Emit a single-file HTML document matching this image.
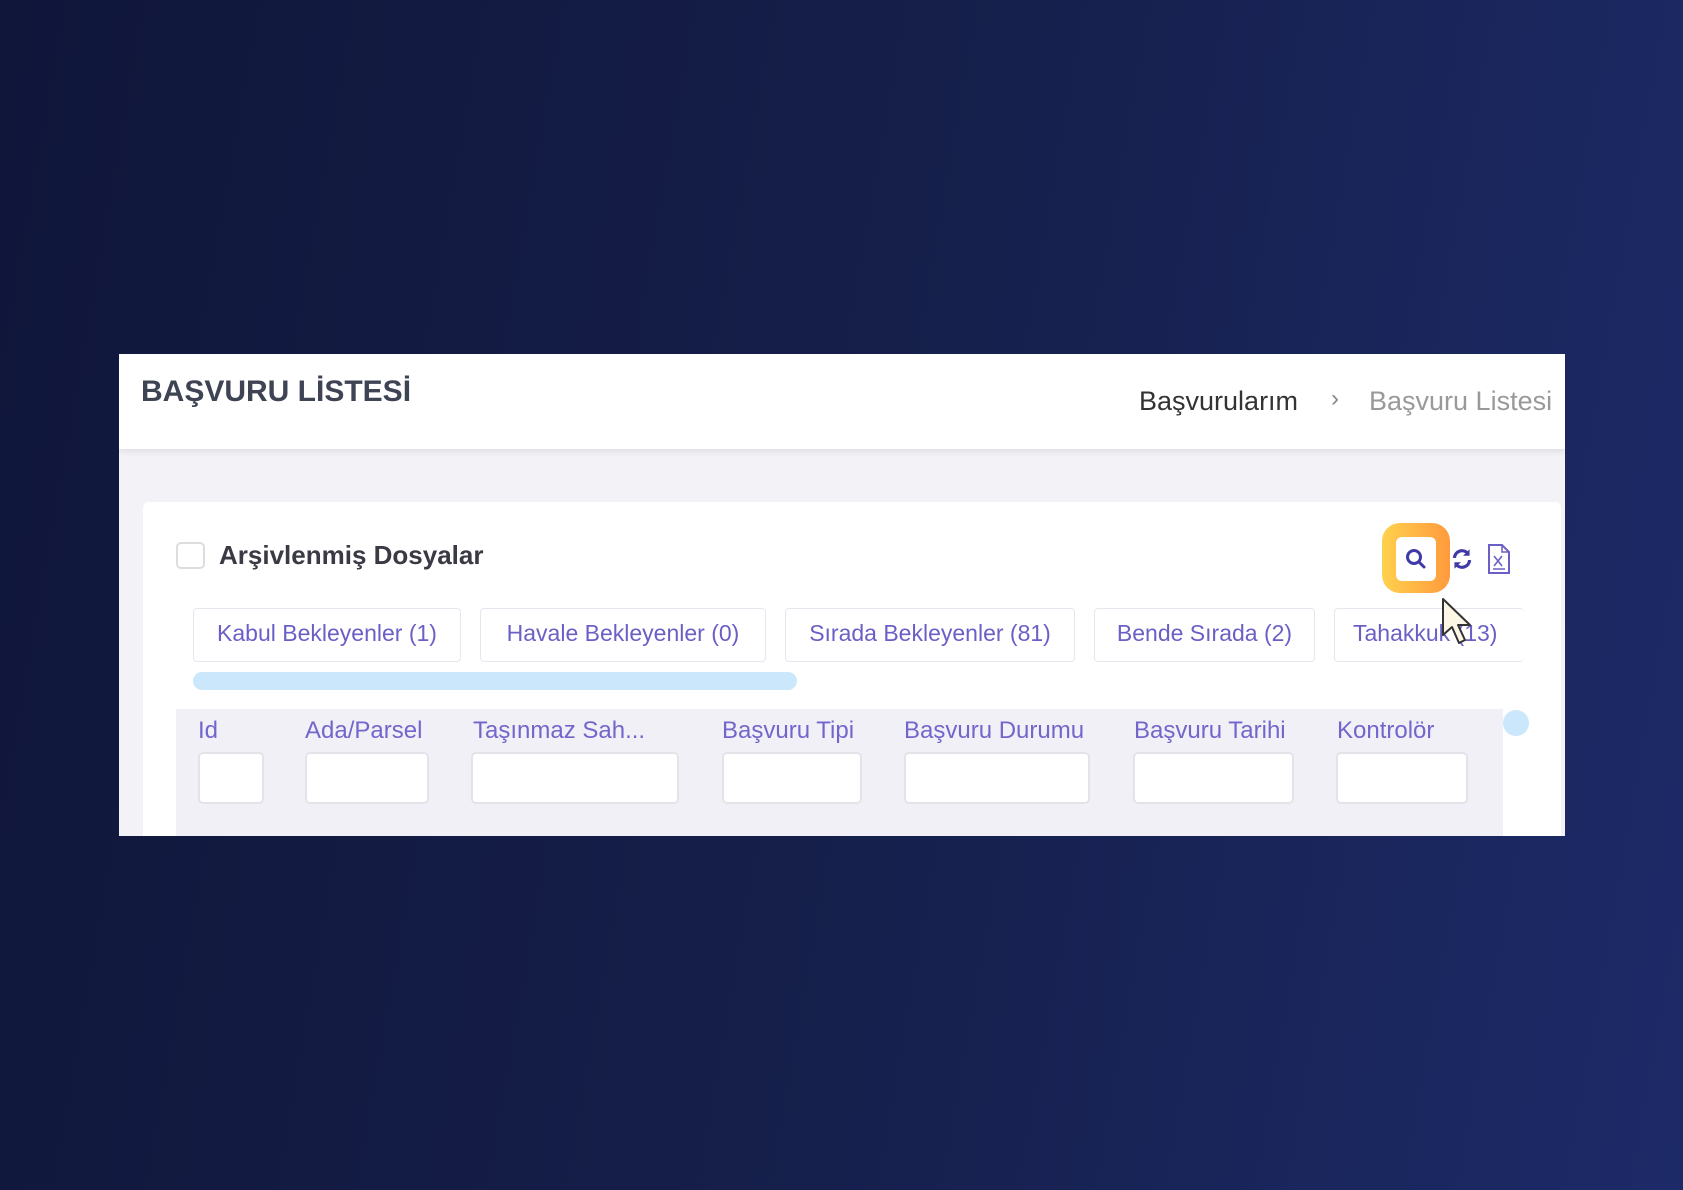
<!DOCTYPE html>
<html><head><meta charset="utf-8"><style>
*{margin:0;padding:0;box-sizing:border-box}
body{width:1683px;height:1190px;overflow:hidden;position:relative;font-family:"Liberation Sans",sans-serif;
background:linear-gradient(100deg,#10163a 0%,#151f4a 50%,#1d2a68 100%)}
.abs{position:absolute}
.panel{left:119px;top:354px;width:1446px;height:482px;background:#f3f3f7;overflow:hidden}
.hdr{left:0;top:0;width:1446px;height:95px;background:#fff;box-shadow:0 3px 6px rgba(0,0,0,.08)}
.card{left:24px;top:148px;width:1418px;height:360px;background:#fff;border-radius:6px}
.t{white-space:nowrap}
.tab{position:absolute;top:254px;height:54px;border:1px solid #e6e6ee;border-radius:4px;color:#6a5fc6;font-size:23px;line-height:48px;text-align:center;background:#fff}
.lbl{position:absolute;top:363px;color:#7266cc;font-size:24px;white-space:nowrap}
.inp{position:absolute;top:398px;height:52px;background:#fff;border:2px solid #e3e3ea;border-radius:5px}
</style></head><body>
<div class="abs panel">
 <div class="abs hdr">
  <div class="abs t" style="left:22px;top:21px;font-size:30px;font-weight:bold;color:#3e4453">BAŞVURU LİSTESİ</div>
  <div class="abs t" style="left:1020px;top:32px;font-size:27px;color:#333">Başvurularım</div>
  <div class="abs t" style="left:1212px;top:31px;font-size:24px;color:#888">›</div>
  <div class="abs t" style="left:1250px;top:32px;font-size:27px;color:#999">Başvuru Listesi</div>
 </div>
 <div class="abs card"></div>
 <div class="abs" style="left:57px;top:188px;width:29px;height:27px;border:2px solid #ddd;border-radius:5px;background:#fff"></div>
 <div class="abs t" style="left:100px;top:186px;font-size:26px;font-weight:bold;color:#3a3a44">Arşivlenmiş Dosyalar</div>
 <div class="abs" style="left:1263px;top:169px;width:68px;height:70px;border-radius:18px;background:linear-gradient(90deg,#ffd14d,#ff9a3d)"></div>
 <div class="abs" style="left:1277px;top:183px;width:40px;height:44px;border-radius:6px;background:#fff"></div>
 <svg class="abs" style="left:1285px;top:193px" width="24" height="24" viewBox="0 0 24 24"><circle cx="10" cy="10" r="6.5" fill="none" stroke="#3f3aa8" stroke-width="3"/><path d="M15 15l5 5" stroke="#3f3aa8" stroke-width="3" stroke-linecap="round"/></svg>
 <svg class="abs" style="left:1330px;top:192px" width="26" height="26" viewBox="0 0 24 24"><path d="M5 11a7 7 0 0 1 12-4.5M19 13a7 7 0 0 1-12 4.5" fill="none" stroke="#3f3aa8" stroke-width="3"/><path d="M19 3v6h-6zM5 21v-6h6z" fill="#3f3aa8"/></svg>
 <svg class="abs" style="left:1368px;top:190px" width="24" height="30" viewBox="0 0 24 30"><path d="M2 1h13l7 7v21H2z" fill="none" stroke="#6a5fc6" stroke-width="2"/><path d="M15 1v7h7" fill="none" stroke="#6a5fc6" stroke-width="1.5"/><path d="M7 12l8 10M15 12l-8 10" stroke="#6a5fc6" stroke-width="1.6"/><path d="M6 25h12" stroke="#6a5fc6" stroke-width="1.5"/></svg>
 <div class="tab" style="left:74px;width:268px">Kabul Bekleyenler (1)</div>
 <div class="tab" style="left:361px;width:286px">Havale Bekleyenler (0)</div>
 <div class="tab" style="left:666px;width:290px">Sırada Bekleyenler (81)</div>
 <div class="tab" style="left:975px;width:221px">Bende Sırada (2)</div>
 <div class="tab" style="left:1215px;width:190px;border-right:none;text-align:left;padding-left:18px">Tahakkuk (13)</div>
 <div class="abs" style="left:74px;top:318px;width:604px;height:18px;border-radius:9px;background:#cbe7fc"></div>
 <div class="abs" style="left:57px;top:355px;width:1327px;height:130px;background:#f0f0f6"></div>
 <div class="abs" style="left:1384px;top:356px;width:26px;height:26px;border-radius:50%;background:#cbe7fc"></div>
 <div class="lbl" style="left:79px">Id</div>
 <div class="lbl" style="left:186px">Ada/Parsel</div>
 <div class="lbl" style="left:354px">Taşınmaz Sah...</div>
 <div class="lbl" style="left:603px">Başvuru Tipi</div>
 <div class="lbl" style="left:785px">Başvuru Durumu</div>
 <div class="lbl" style="left:1015px">Başvuru Tarihi</div>
 <div class="lbl" style="left:1218px">Kontrolör</div>
 <div class="inp" style="left:79px;width:66px"></div>
 <div class="inp" style="left:186px;width:124px"></div>
 <div class="inp" style="left:352px;width:208px"></div>
 <div class="inp" style="left:603px;width:140px"></div>
 <div class="inp" style="left:785px;width:186px"></div>
 <div class="inp" style="left:1014px;width:161px"></div>
 <div class="inp" style="left:1217px;width:132px"></div>
 <svg class="abs" style="left:1322px;top:243px" width="34" height="50" viewBox="0 0 34 50"><path d="M2 2v36l9-8 7 16 6-3-7-15h12z" fill="#fbf6e6" stroke="#333" stroke-width="2" stroke-linejoin="round"/></svg>
</div>
</body></html>
